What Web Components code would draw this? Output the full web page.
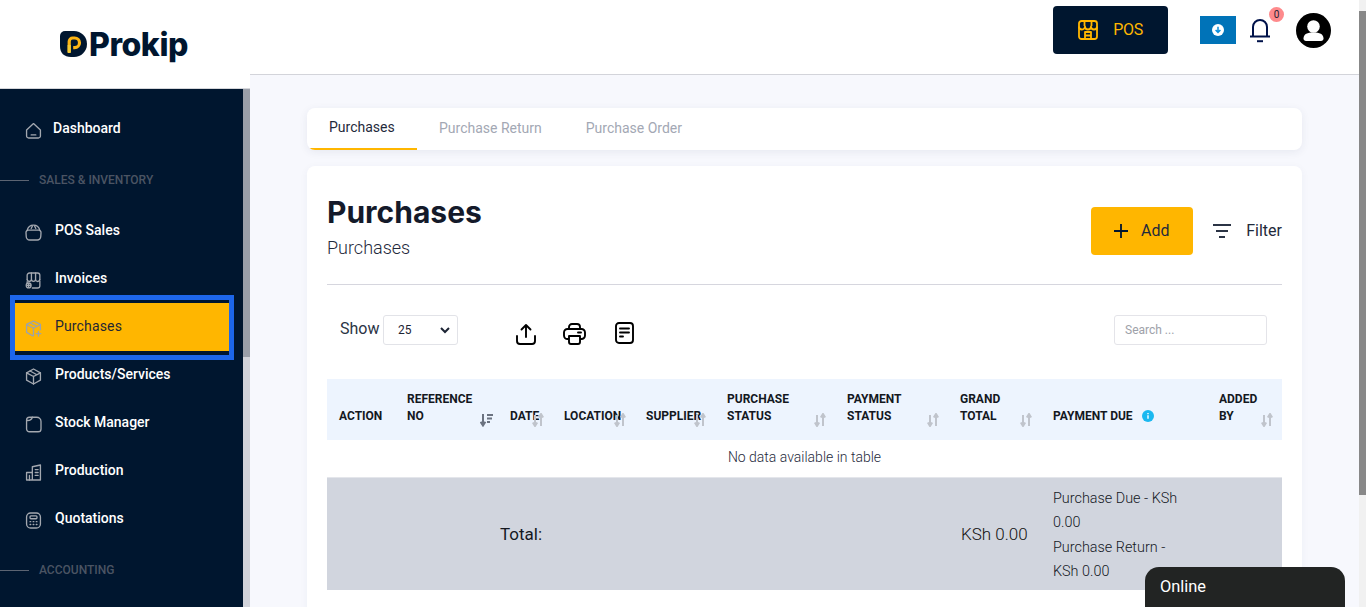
<!DOCTYPE html>
<html>
<head>
<meta charset="utf-8">
<title>Prokip</title>
<style>
html, body { margin: 0; height: 100%; overflow: hidden; }
body { font-family: Roboto, "Liberation Sans", sans-serif; }
</style>
</head>
<body>
<app-shell>
  <side-bar slot="side">
    <nav-item label="Dashboard" icon="home" style="--text-x:53px"></nav-item>
    <nav-section label="SALES &amp; INVENTORY"></nav-section>
    <nav-item label="POS Sales" icon="bag"></nav-item>
    <nav-item label="Invoices" icon="shop"></nav-item>
    <nav-item label="Purchases" icon="boxplus" active></nav-item>
    <nav-item label="Products/Services" icon="box"></nav-item>
    <nav-item label="Stock Manager" icon="folder"></nav-item>
    <nav-item label="Production" icon="building"></nav-item>
    <nav-item label="Quotations" icon="calc"></nav-item>
    <nav-section label="ACCOUNTING"></nav-section>
  </side-bar>
  <top-bar slot="top"></top-bar>
  <tab-strip slot="main"></tab-strip>
  <purchase-card slot="main"></purchase-card>
</app-shell>
<chat-pill></chat-pill>

<script>
const icons = {
  home: '<path d="M2 7.500 8 2l6 5.500v5.200a1.800 1.800 0 0 1-1.800 1.800H3.800A1.800 1.800 0 0 1 2 12.700z"/><path d="M6 11.800h4"/>',
  bag: '<path d="M2.500 6.200C3.200 3.200 5.200 1.600 8 1.600s4.800 1.600 5.500 4.600"/><path d="M3.500 6h9a2 2 0 0 1 2 2.200l-.2 3.300a3 3 0 0 1-3 3H4.700a3 3 0 0 1-3-3l-.2-3.300A2 2 0 0 1 3.500 6z"/><path d="M6 4.500 7 2.500M10 4.500 9 2.500"/>',
  shop: '<path d="M2.500 7V3.500a2 2 0 0 1 2-2h7a2 2 0 0 1 2 2V7"/><path d="M6.200 1.500V7M9.800 1.500V7M2.500 7a1.850 1.850 0 0 0 3.700 0 1.800 1.800 0 0 0 3.600 0 1.850 1.850 0 0 0 3.700 0"/><path d="M2.500 9v1M13.500 8.500V12.500a2 2 0 0 1-2 2H7"/><circle cx="3.800" cy="12.300" r="2.100"/><path d="M3.800 10.800v3M2.300 12.300h3"/>',
  boxplus: '<path d="M8 1.500 14 4.500v4.500M8 1.500 2 4.500v6.800L7.500 14.500M2 4.500l6 3.300 6-3.300M8 7.800v6.200M5 3l6 3.200"/><path d="M12.300 10.500v4M10.300 12.500h4"/>',
  box: '<path d="M8 1.500 14 4.800v6.400L8 14.500 2 11.200V4.800z"/><path d="M2 4.800 8 8l6-3.200M8 8v6.500M5 3.200l6 3.300"/>',
  folder: '<path d="M2 4.200a2.500 2.500 0 0 1 2.500-2.500h6.300a3.700 3.700 0 0 1 3.700 3.700v6.400a2.500 2.500 0 0 1-2.500 2.500H4.500A2.500 2.500 0 0 1 2 11.800z"/><path d="M2 4.500c2.500.3 4.200-.2 5-2.800"/>',
  building: '<path d="M2 14.500h12M7 14.500V3l7-1.500v13M7 8H2v6.500"/><path d="M9.500 5.500h2.500M9.500 8h2.500M9.500 10.500h2.500M4.500 10.500v4"/>',
  calc: '<rect x="2" y="1.500" width="12" height="13" rx="3.500"/><rect x="5" y="4" width="6" height="2.500" rx=".8"/><path d="M5 9h.6M7.700 9h.6M10.400 9h.6M5 11.500h.6M7.700 11.500h.6M10.400 11.500h.6"/>'
}

class AppShell extends HTMLElement {
  constructor() {
    super()
    this.attachShadow({ mode: 'open' }).innerHTML = `
<style>
:host { display: grid; grid-template-columns: 250px 1fr 7px; height: 607px; overflow: hidden; background: #f7f8fd; }
.col { display: flex; flex-direction: column; min-width: 0; }
.body { padding: 33px 57px 0 57px; display: flex; flex-direction: column; gap: 16px; }
.bar { background: #f1f1f1; }
.thumb { margin-top: 11px; background: #888; height: 484px; }
</style>
<slot name="side"></slot>
<div class="col">
  <slot name="top"></slot>
  <div class="body"><slot name="main"></slot></div>
</div>
<div class="bar"><div class="thumb"></div></div>`
  }
}

class SideBar extends HTMLElement {
  constructor() {
    super()
    this.attachShadow({ mode: 'open' }).innerHTML = `
<style>
:host { display: flex; flex-direction: column; height: 607px; background: #fff; }
.brand { height: 88px; flex: none; box-sizing: border-box; display: flex; align-items: flex-start; padding: 31px 0 0 60px; gap: 2px; }
svg { flex: none; }
.name { font: 800 32px/1 Inter, sans-serif; letter-spacing: -.45px; color: #00162f; margin-top: -2px; }
.wrap { flex: 1; display: grid; grid-template-columns: 243px 7px; border-top: 1px solid #d5d6da; min-height: 0; }
.nav { background: #00162f; padding-top: 16px; display: flex; flex-direction: column; }
.track { background: #d1d3da; }
.thumb { background: #9a9fa9; height: 268px; }
</style>
<div class="brand">
  <svg width="27" height="27" viewBox="0 0 27 27">
    <path d="M0 5a5 5 0 0 1 5-5h9a13 13 0 0 1 0 26h-3C4 26 0 22 0 15z" fill="#00162f"/>
    <path d="M9.200 21V10.500a3.500 3.500 0 0 1 3.500-3.500h2a4.800 4.800 0 0 1 0 9.600h-1.500" fill="none" stroke="#fdb515" stroke-width="3.200"/>
    <path d="M9.200 14v8" stroke="#f4cb35" stroke-width="3.200"/>
  </svg>
  <span class="name">Prokip</span>
</div>
<div class="wrap">
  <div class="nav"><slot></slot></div>
  <div class="track"><div class="thumb"></div></div>
</div>`
  }
}

class NavItem extends HTMLElement {
  constructor() {
    super()
    const active = this.hasAttribute('active')
    const stroke = active ? '#9aa3ad' : '#a3a8b0'
    this.attachShadow({ mode: 'open' }).innerHTML = `
<style>
:host { display: block; margin: 0 14px 0 15px; position: relative; }
.row { height: 48px; display: flex; align-items: center; box-sizing: border-box; padding-left: 11px; font: ${active ? 400 : 500} 14px/20px Roboto, sans-serif; letter-spacing: ${active ? '.15px' : '0'}; color: ${active ? '#1f2634' : '#fff'}; background: ${active ? '#ffb600' : 'transparent'}; }
svg { width: 15px; height: 15px; flex: none; fill: none; stroke: ${stroke}; stroke-width: 1.150; stroke-linecap: round; stroke-linejoin: round; margin-top: 2px; overflow: visible; }
span { margin: -2px 0 0 calc(var(--text-x, 55px) - 41px); }
.focus { position: absolute; inset: -8px -5px -9px -5px; border: 5px solid #1d66ea; }
</style>
<div class="row"><svg viewBox="1.500 1.500 13 13">${icons[this.getAttribute('icon')]}</svg><span>${this.getAttribute('label')}</span></div>
${active ? '<div class="focus"></div>' : ''}`
  }
}

class NavSection extends HTMLElement {
  constructor() {
    super()
    this.attachShadow({ mode: 'open' }).innerHTML = `
<style>
:host { display: flex; align-items: center; height: 54px; gap: 10px; font: 500 12px/16px Roboto, sans-serif; color: #4b5463; }
i { width: 29px; height: 1px; background: #5c6472; margin-top: 1px; }
</style>
<i></i><span>${this.getAttribute('label')}</span>`
  }
}

class TopBar extends HTMLElement {
  constructor() {
    super()
    this.attachShadow({ mode: 'open' }).innerHTML = `
<style>
:host { display: flex; align-items: flex-start; height: 75px; box-sizing: border-box; background: #fff; border-bottom: 1px solid #d3d4da; padding: 6px 27px 0 803px; }
.pos { width: 115px; height: 48px; box-sizing: border-box; background: #00162f; border-radius: 4px; color: #ffb600; display: flex; align-items: center; justify-content: center; gap: 15px; font: 400 16px/20px Roboto, sans-serif; letter-spacing: -.3px; }
.dl { width: 36px; height: 28px; background: #0073b8; margin: 10px 0 0 32px; display: flex; align-items: center; justify-content: center; }
.bell { position: relative; margin: 11px 0 0 13px; width: 22px; height: 26px; }
.badge { position: absolute; left: 20px; top: -10px; width: 15px; height: 15px; border-radius: 50%; background: #fe8a8c; color: #1c2434; font: 400 10px/15px Roboto, sans-serif; text-align: center; }
.user { margin: 7px 0 0 25px; }
</style>
<div class="pos">
  <svg width="20" height="20" viewBox="0 0 20 20" fill="none" stroke="#ffb600" stroke-width="1.800" stroke-linejoin="round"><rect x="1" y="1" width="18" height="18" rx="2.500"/><path d="M1 6.500a3 3 0 0 0 6 0 3 3 0 0 0 6 0 3 3 0 0 0 6 0M6.500 1v5M13.500 1v5M7 19v-7h6v7M7 15.500h6"/></svg>
  <span>POS</span>
</div>
<div class="dl">
  <svg width="12" height="12" viewBox="0 0 12 12"><circle cx="6" cy="6" r="6" fill="#fff"/><path d="M6 2.800v5.600M3.600 6 6 8.400 8.400 6" fill="none" stroke="#0a8fdc" stroke-width="1.500"/></svg>
</div>
<div class="bell">
  <svg width="22" height="26" viewBox="0 0 22 26" fill="none" stroke="#00124a" stroke-width="2"><path d="M4 19V10a7 7 0 0 1 14 0v9"/><path d="M1 19.500h20"/><path d="M8 24.200h6"/></svg>
  <div class="badge">0</div>
</div>
<svg class="user" width="35" height="35" viewBox="0 0 35 35"><circle cx="17.500" cy="17.500" r="17.500"/><circle cx="17.500" cy="13.500" r="6.300" fill="#fff"/><path d="M7.500 25.500c0-4.500 4-6 10-6s10 1.500 10 6c0 1.500-1 2.500-2.500 2.500H10c-1.500 0-2.500-1-2.500-2.500z" fill="#fff"/></svg>`
  }
}

class TabStrip extends HTMLElement {
  constructor() {
    super()
    this.attachShadow({ mode: 'open' }).innerHTML = `
<style>
:host { display: flex; height: 42px; background: #fff; border-radius: 8px; box-shadow: 0 2px 8px rgba(40,50,90,.08); overflow: hidden; font: 400 14px/20px Roboto, sans-serif; }
div { box-sizing: border-box; height: 42px; padding: 10px 22px 0; color: #a3a8b4; }
.on { width: 110px; color: #1f2a3c; border-bottom: 2px solid #ffb600; padding-top: 9px; }
</style>
<div class="on">Purchases</div><div>Purchase Return</div><div>Purchase Order</div>`
  }
}

class SortMark extends HTMLElement {
  constructor() {
    super()
    const active = this.hasAttribute('active')
    this.attachShadow({ mode: 'open' }).innerHTML = `
<style>
:host { position: absolute; right: var(--r, 9px); bottom: 13px; width: 12px; height: 14px; display: block; }
svg { display: block; }
</style>
${active
  ? '<svg width="13" height="14" viewBox="0 0 13 14" fill="none" stroke="#6b7280" stroke-width="2"><path d="M3 1v11M.6 8.800 3 12.500l2.400-3.700"/><path d="M7 2h6M7 5.500h5M7 9h3"/></svg>'
  : '<svg width="12" height="14" viewBox="0 0 12 14" fill="none" stroke="#c0c4cc" stroke-width="2"><path d="M3 2v11M.8 9.500 3 13l2.200-3.500"/><path d="M9 13V1M6.800 4.500 9 1l2.200 3.500"/></svg>'}`
  }
}

class PurchaseCard extends HTMLElement {
  constructor() {
    super()
    const th = (text, mark, extra = '') => `<th style="${extra}">${text}${mark === false ? '' : `<sort-mark ${mark === 'on' ? 'active' : ''}></sort-mark>`}</th>`
    this.attachShadow({ mode: 'open' }).innerHTML = `
<style>
:host { display: block; background: #fff; border-radius: 8px; padding: 20px 20px 40px; box-shadow: 0 2px 8px rgba(40,50,90,.05); color: #1c2434; }
.head { display: flex; align-items: flex-start; height: 98px; border-bottom: 1px solid #d6d6de; }
h1 { margin: 7px 0 0; font: 700 30px/38px Inter, Roboto, sans-serif; color: #141a2a; }
.sub { font: 300 18px/24px Roboto, sans-serif; margin-top: 5px; color: #1f2a3c; }
.spacer { flex: 1; }
.add { width: 102px; height: 48px; margin-top: 21px; background: #ffb600; border-radius: 4px; display: flex; align-items: center; justify-content: center; gap: 12px; font: 400 16px/20px Roboto, sans-serif; color: #1f2a3c; padding-right: 2px; box-sizing: border-box; }
.filter { display: flex; align-items: center; gap: 15px; margin: 21px 0 0 20px; height: 48px; font: 400 16px/20px Roboto, sans-serif; color: #1f2a3c; }
.tools { display: flex; align-items: flex-start; height: 94px; padding-top: 30px; box-sizing: border-box; }
.show { font: 400 16px/20px Roboto, sans-serif; padding-left: 13px; margin-top: 4px; width: 43px; color: #2b3445; }
.select { width: 75px; height: 30px; box-sizing: border-box; border: 1px solid #e2e3e8; border-radius: 3px; display: flex; align-items: center; justify-content: space-between; padding: 0 7px 0 14px; font: 400 12px/16px Roboto, sans-serif; }
.search { margin-left: auto; margin-right: 15px; width: 153px; height: 30px; box-sizing: border-box; border: 1px solid #e4e4e9; border-radius: 3px; padding: 0 10px; font: 400 12px/28px Roboto, sans-serif; color: #9ea1a9; }
table { width: 100%; border-collapse: collapse; table-layout: fixed; }
th { position: relative; background: #edf4fe; height: 61px; box-sizing: border-box; text-align: left; padding: 0 6px 15px 12px; font: 700 12px/17px Roboto, sans-serif; color: #14181f; vertical-align: bottom; }
.empty td { height: 37px; padding: 0 0 3px; box-sizing: border-box; text-align: center; font: 300 14px/20px Roboto, sans-serif; color: #1f2a3c; }
.total td { background: #d1d5de; height: 113px; padding: 0; vertical-align: middle; box-sizing: border-box; border-top: 1px solid #e4e6eb; }
.total .t { font: 400 17px/20px Roboto, sans-serif; color: #14181f; padding: 0 0 0 2px; }
.total .g { font: 300 17px/20px Roboto, sans-serif; color: #111; padding-left: 13px; }
.total .d { font: 300 14.400px/24.400px Roboto, sans-serif; padding: 4px 0 0 12px; color: #14181f; }
.info { display: inline-block; vertical-align: -2px; margin-left: 9px; }
.upload { margin: 8px 0 0 57px; }
.print { margin: 8px 0 0 26px; }
.doc { margin: 7px 0 0 29px; }
</style>
<div class="head">
  <div>
    <h1>Purchases</h1>
    <div class="sub">Purchases</div>
  </div>
  <div class="spacer"></div>
  <div class="add">
    <svg width="16" height="16" viewBox="0 0 16 16" stroke="#00162f" stroke-width="1.800"><path d="M8 1v14M1 8h14"/></svg>
    <span>Add</span>
  </div>
  <div class="filter">
    <svg width="18" height="14" viewBox="0 0 18 14" stroke="#2b3445" stroke-width="2"><path d="M0 1h18M3 7h12M6 13h6"/></svg>
    <span>Filter</span>
  </div>
</div>
<div class="tools">
  <div class="show">Show</div>
  <div class="select"><span>25</span><svg width="10" height="7" viewBox="0 0 10 7" fill="none" stroke="#1c2434" stroke-width="2"><path d="M1 1l4 4 4-4"/></svg></div>
  <svg class="upload" width="22" height="22" viewBox="0 0 22 22" fill="none" stroke="#000" stroke-width="1.900" stroke-linecap="round" stroke-linejoin="round"><path d="M11 14V2M6.500 6.500 11 2l4.500 4.500"/><path d="M2 13v5a3 3 0 0 0 3 3h12a3 3 0 0 0 3-3v-5"/></svg>
  <svg class="print" width="23" height="22" viewBox="0 0 23 22" fill="none" stroke="#000" stroke-width="1.900" stroke-linejoin="round"><path d="M6 6V4a3 3 0 0 1 3-3h5a3 3 0 0 1 3 3v2"/><path d="M6 16H4.500A3.500 3.500 0 0 1 1 12.500V9.500A3.500 3.500 0 0 1 4.500 6h14A3.500 3.500 0 0 1 22 9.500v3a3.500 3.500 0 0 1-3.500 3.500H17"/><path d="M6 13h11v6a2 2 0 0 1-2 2H8a2 2 0 0 1-2-2z"/><path d="M15 9.500h3" stroke-linecap="round"/></svg>
  <svg class="doc" width="19" height="22" viewBox="0 0 19 22" fill="none" stroke="#000" stroke-width="1.900" stroke-linecap="round"><rect x="1" y="1" width="17" height="20" rx="3"/><path d="M5 6.500h9M5 10.500h9M5 14.500h3"/></svg>
  <div class="search">Search ...</div>
</div>
<table>
  <colgroup><col style="width:68px"><col style="width:103px"><col style="width:54px"><col style="width:82px"><col style="width:81px"><col style="width:120px"><col style="width:113px"><col style="width:93px"><col style="width:166px"><col></colgroup>
  <thead><tr>
    ${th('ACTION', false)}
    ${th('REFERENCE NO', 'on', 'padding-right:20px;--r:6px')}
    ${th('DATE', true, '--r:8px')}
    ${th('LOCATION', true, '--r:8px')}
    ${th('SUPPLIER', true)}
    ${th('PURCHASE STATUS', true, 'padding-right:40px')}
    ${th('PAYMENT STATUS', true, 'padding-right:40px')}
    ${th('GRAND TOTAL', true, 'padding-right:40px')}
    <th>PAYMENT DUE<svg class="info" width="12" height="12" viewBox="0 0 12 12"><circle cx="6" cy="6" r="6" fill="#1bb8f0"/><path d="M6 5.200v3.600M6 3v1.300" stroke="#fff" stroke-width="1.400"/></svg></th>
    ${th('ADDED BY', true, 'padding-right:16px')}
  </tr></thead>
  <tbody>
    <tr class="empty"><td colspan="10">No data available in table</td></tr>
    <tr class="total">
      <td colspan="2"></td>
      <td colspan="5" class="t">Total:</td>
      <td class="g">KSh 0.00</td>
      <td class="d"><div style="width:130px">Purchase Due - KSh 0.00<br>Purchase Return - KSh 0.00</div></td>
      <td></td>
    </tr>
  </tbody>
</table>`
  }
}

class ChatPill extends HTMLElement {
  constructor() {
    super()
    this.attachShadow({ mode: 'open' }).innerHTML = `
<style>
:host { position: fixed; left: 1145px; top: 567px; width: 200px; height: 40px; background: #222423; color: #fff; border-radius: 14px 14px 0 0; box-sizing: border-box; padding: 10px 15px; font: 400 16.400px/20px Roboto, sans-serif; }
</style>
Online`
  }
}

customElements.define('app-shell', AppShell)
customElements.define('side-bar', SideBar)
customElements.define('nav-item', NavItem)
customElements.define('nav-section', NavSection)
customElements.define('top-bar', TopBar)
customElements.define('tab-strip', TabStrip)
customElements.define('sort-mark', SortMark)
customElements.define('purchase-card', PurchaseCard)
customElements.define('chat-pill', ChatPill)
</script>
</body>
</html>
